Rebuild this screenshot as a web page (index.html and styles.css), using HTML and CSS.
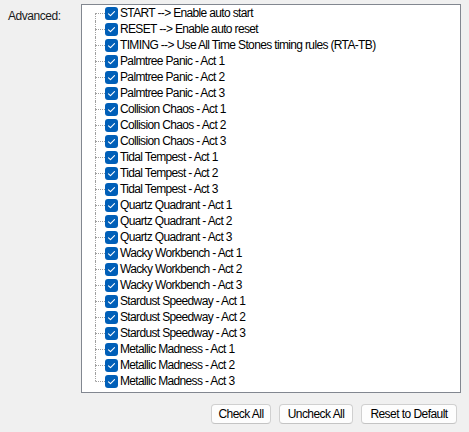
FILE: index.html
```html
<!DOCTYPE html>
<html>
<head>
<meta charset="utf-8">
<link rel="stylesheet" href="styles.css">
</head>
<body>
<div class="panel">
  <div class="label">Advanced:</div>
  <div class="box">
    <div class="tree" id="tree"></div>
  </div>
</div>
<div class="buttons">
  <button class="btn btn-check">Check All</button>
  <button class="btn btn-uncheck">Uncheck All</button>
  <button class="btn btn-reset">Reset to Default</button>
</div>
<script>
var items = [
  "START --> Enable auto start",
  "RESET --> Enable auto reset",
  "TIMING --> Use All Time Stones timing rules (RTA-TB)"
];
var zones = ["Palmtree Panic","Collision Chaos","Tidal Tempest","Quartz Quadrant","Wacky Workbench","Stardust Speedway","Metallic Madness"];
zones.forEach(function(z){ for (var i=1;i<=3;i++) items.push(z + " - Act " + i); });
var tree = document.getElementById("tree");
items.forEach(function(t, i){
  var row = document.createElement("div");
  row.className = "row" + (i===0 ? " first" : "") + (i===items.length-1 ? " last" : "");
  row.innerHTML = '<span class="branch"><span class="up"></span><span class="down"></span></span>' +
    '<span class="cb"><svg width="13" height="13" viewBox="0 0 13 13"><polyline points="3.5,6.8 5.5,8.6 9.5,4.6" fill="none" stroke="#fff" stroke-width="1.1" stroke-linecap="round" stroke-linejoin="round"/></svg></span>' +
    '<span class="txt"></span>';
  row.querySelector(".txt").textContent = t;
  tree.appendChild(row);
});
</script>
</body>
</html>
```
FILE: styles.css
```css
html, body {
  margin: 0;
  padding: 0;
  background: #f0f0f0;
  width: 469px;
  height: 432px;
  overflow: hidden;
  font-family: "Liberation Sans", Arial, sans-serif;
  font-size: 12px;
  letter-spacing: -0.6px;
  color: #000;
}
.panel {
  display: flex;
  padding-top: 4px;
}
.label {
  width: 73px;
  padding-left: 8px;
  padding-top: 5px;
  line-height: 14px;
  color: #1a1a1a;
  letter-spacing: -0.45px;
}
.box {
  width: 378px;
  height: 387px;
  border: 1px solid #828790;
  background: #fff;
}
.tree {
  padding-left: 13px;
}
.row {
  display: flex;
  align-items: center;
  height: 16px;
}
.branch {
  width: 10px;
  height: 16px;
  display: flex;
  flex-direction: column;
  flex: none;
}
.up {
  height: 8px;
  border-left: 1px dotted #a0a0a0;
  box-sizing: border-box;
}
.down {
  flex: 1;
  border-left: 1px dotted #a0a0a0;
  border-top: 1px dotted #a0a0a0;
  box-sizing: border-box;
}
.row.first .up { border-left-color: transparent; }
.row.last .down { border-left-color: transparent; }
.cb {
  width: 13px;
  height: 13px;
  border-radius: 3px;
  background: #005fb8;
  flex: none;
  display: block;
}
.cb svg { display: block; }
.txt {
  margin-left: 2px;
  white-space: nowrap;
  line-height: 16px;
  letter-spacing: -0.65px;
}
.buttons {
  display: flex;
  justify-content: flex-end;
  gap: 8px;
  padding-right: 12px;
  padding-top: 11px;
}
.btn {
  height: 20px;
  box-sizing: border-box;
  border: 1px solid #d0d0d0;
  border-bottom-color: #c4c4c4;
  border-radius: 4px;
  background: #fdfdfd;
  font-family: "Liberation Sans", Arial, sans-serif;
  font-size: 12px;
  letter-spacing: -0.55px;
  color: #000;
  padding: 0;
  line-height: 16px;
}
.btn-check { width: 60px; }
.btn-uncheck { width: 74px; }
.btn-reset { width: 96px; }
```
